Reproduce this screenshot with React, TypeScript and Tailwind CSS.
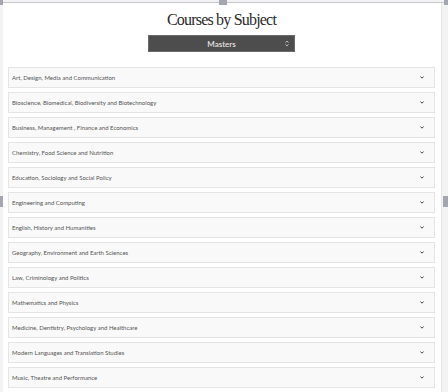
import React from "react";

const subjects = [
  "Art, Design, Media and Communication",
  "Bioscience, Biomedical, Biodiversity and Biotechnology",
  "Business, Management , Finance and Economics",
  "Chemistry, Food Science and Nutrition",
  "Education, Sociology and Social Policy",
  "Engineering and Computing",
  "English, History and Humanities",
  "Geography, Environment and Earth Sciences",
  "Law, Criminology and Politics",
  "Mathematics and Physics",
  "Medicine, Dentistry, Psychology and Healthcare",
  "Modern Languages and Translation Studies",
  "Music, Theatre and Performance",
];

function Chevron() {
  return (
    <svg width="4" height="3" viewBox="0 0 4 3" aria-hidden="true">
      <path d="M0.4 0.5L2 2.2L3.6 0.5" fill="none" stroke="#444" strokeWidth="1" />
    </svg>
  );
}

function UpDown() {
  return (
    <svg width="4" height="7" viewBox="0 0 4 7" aria-hidden="true">
      <path d="M0.6 2.6L2 1L3.4 2.6M0.6 4.4L2 6L3.4 4.4" fill="none" stroke="#d8d8d8" strokeWidth="0.8" />
    </svg>
  );
}

export default function App() {
  return (
    <div className="relative w-[448px] h-[392px] overflow-hidden bg-[#f3f3f3]">
      {/* selection frame */}
      <div className="absolute left-0 right-0 top-[2px] h-px bg-[#c6c8ce]" />
      <div className="absolute left-0 top-0 w-[3px] h-[5px] bg-[#a3a6ae]" />
      <div className="absolute left-[219px] top-0 w-[8px] h-[5px] bg-[#a3a6ae]" />
      <div className="absolute right-0 top-0 w-[4px] h-[5px] bg-[#a3a6ae]" />
      <div className="absolute left-0 top-[196px] w-[3px] h-[11px] bg-[#a3a6ae]" />
      <div className="absolute right-0 top-[196px] w-[5px] h-[11px] bg-[#a3a6ae]" />

      <div className="ml-[3px] mr-[6px] mt-[3px] h-[389px] bg-white border-r border-[#e6e6e6] px-[5px] pr-[6px]">
        <h1
          className="text-center text-[16px] leading-[22px] pt-[6px] tracking-[-0.05em] text-[#2a2a2a]"
          style={{ fontFamily: '"Liberation Serif", serif' }}
        >
          Courses by Subject
        </h1>
        <div className="flex justify-center mt-[4px]">
          <div className="relative w-[147px] h-[17px] bg-[#4d4d4d] border border-[#6a6a6a] flex items-center justify-center">
            <span
              className="text-[8px] font-semibold text-[#e4e0e0]"
              style={{ fontFamily: "Lato, sans-serif" }}
            >
              Masters
            </span>
            <span className="absolute right-[5px] top-[4px] flex">
              <UpDown />
            </span>
          </div>
        </div>
        <div className="mt-[15px] flex flex-col gap-[4px]">
          {subjects.map((s) => (
            <div
              key={s}
              className="h-[21px] bg-[#f9f9f9] border border-[#e4e4e4] flex items-center justify-between pl-[3px] pr-[10px]"
            >
              <span
                className="text-[6px] text-[#555]"
                style={{ fontFamily: "Lato, sans-serif" }}
              >
                {s}
              </span>
              <Chevron />
            </div>
          ))}
        </div>
      </div>
    </div>
  );
}
